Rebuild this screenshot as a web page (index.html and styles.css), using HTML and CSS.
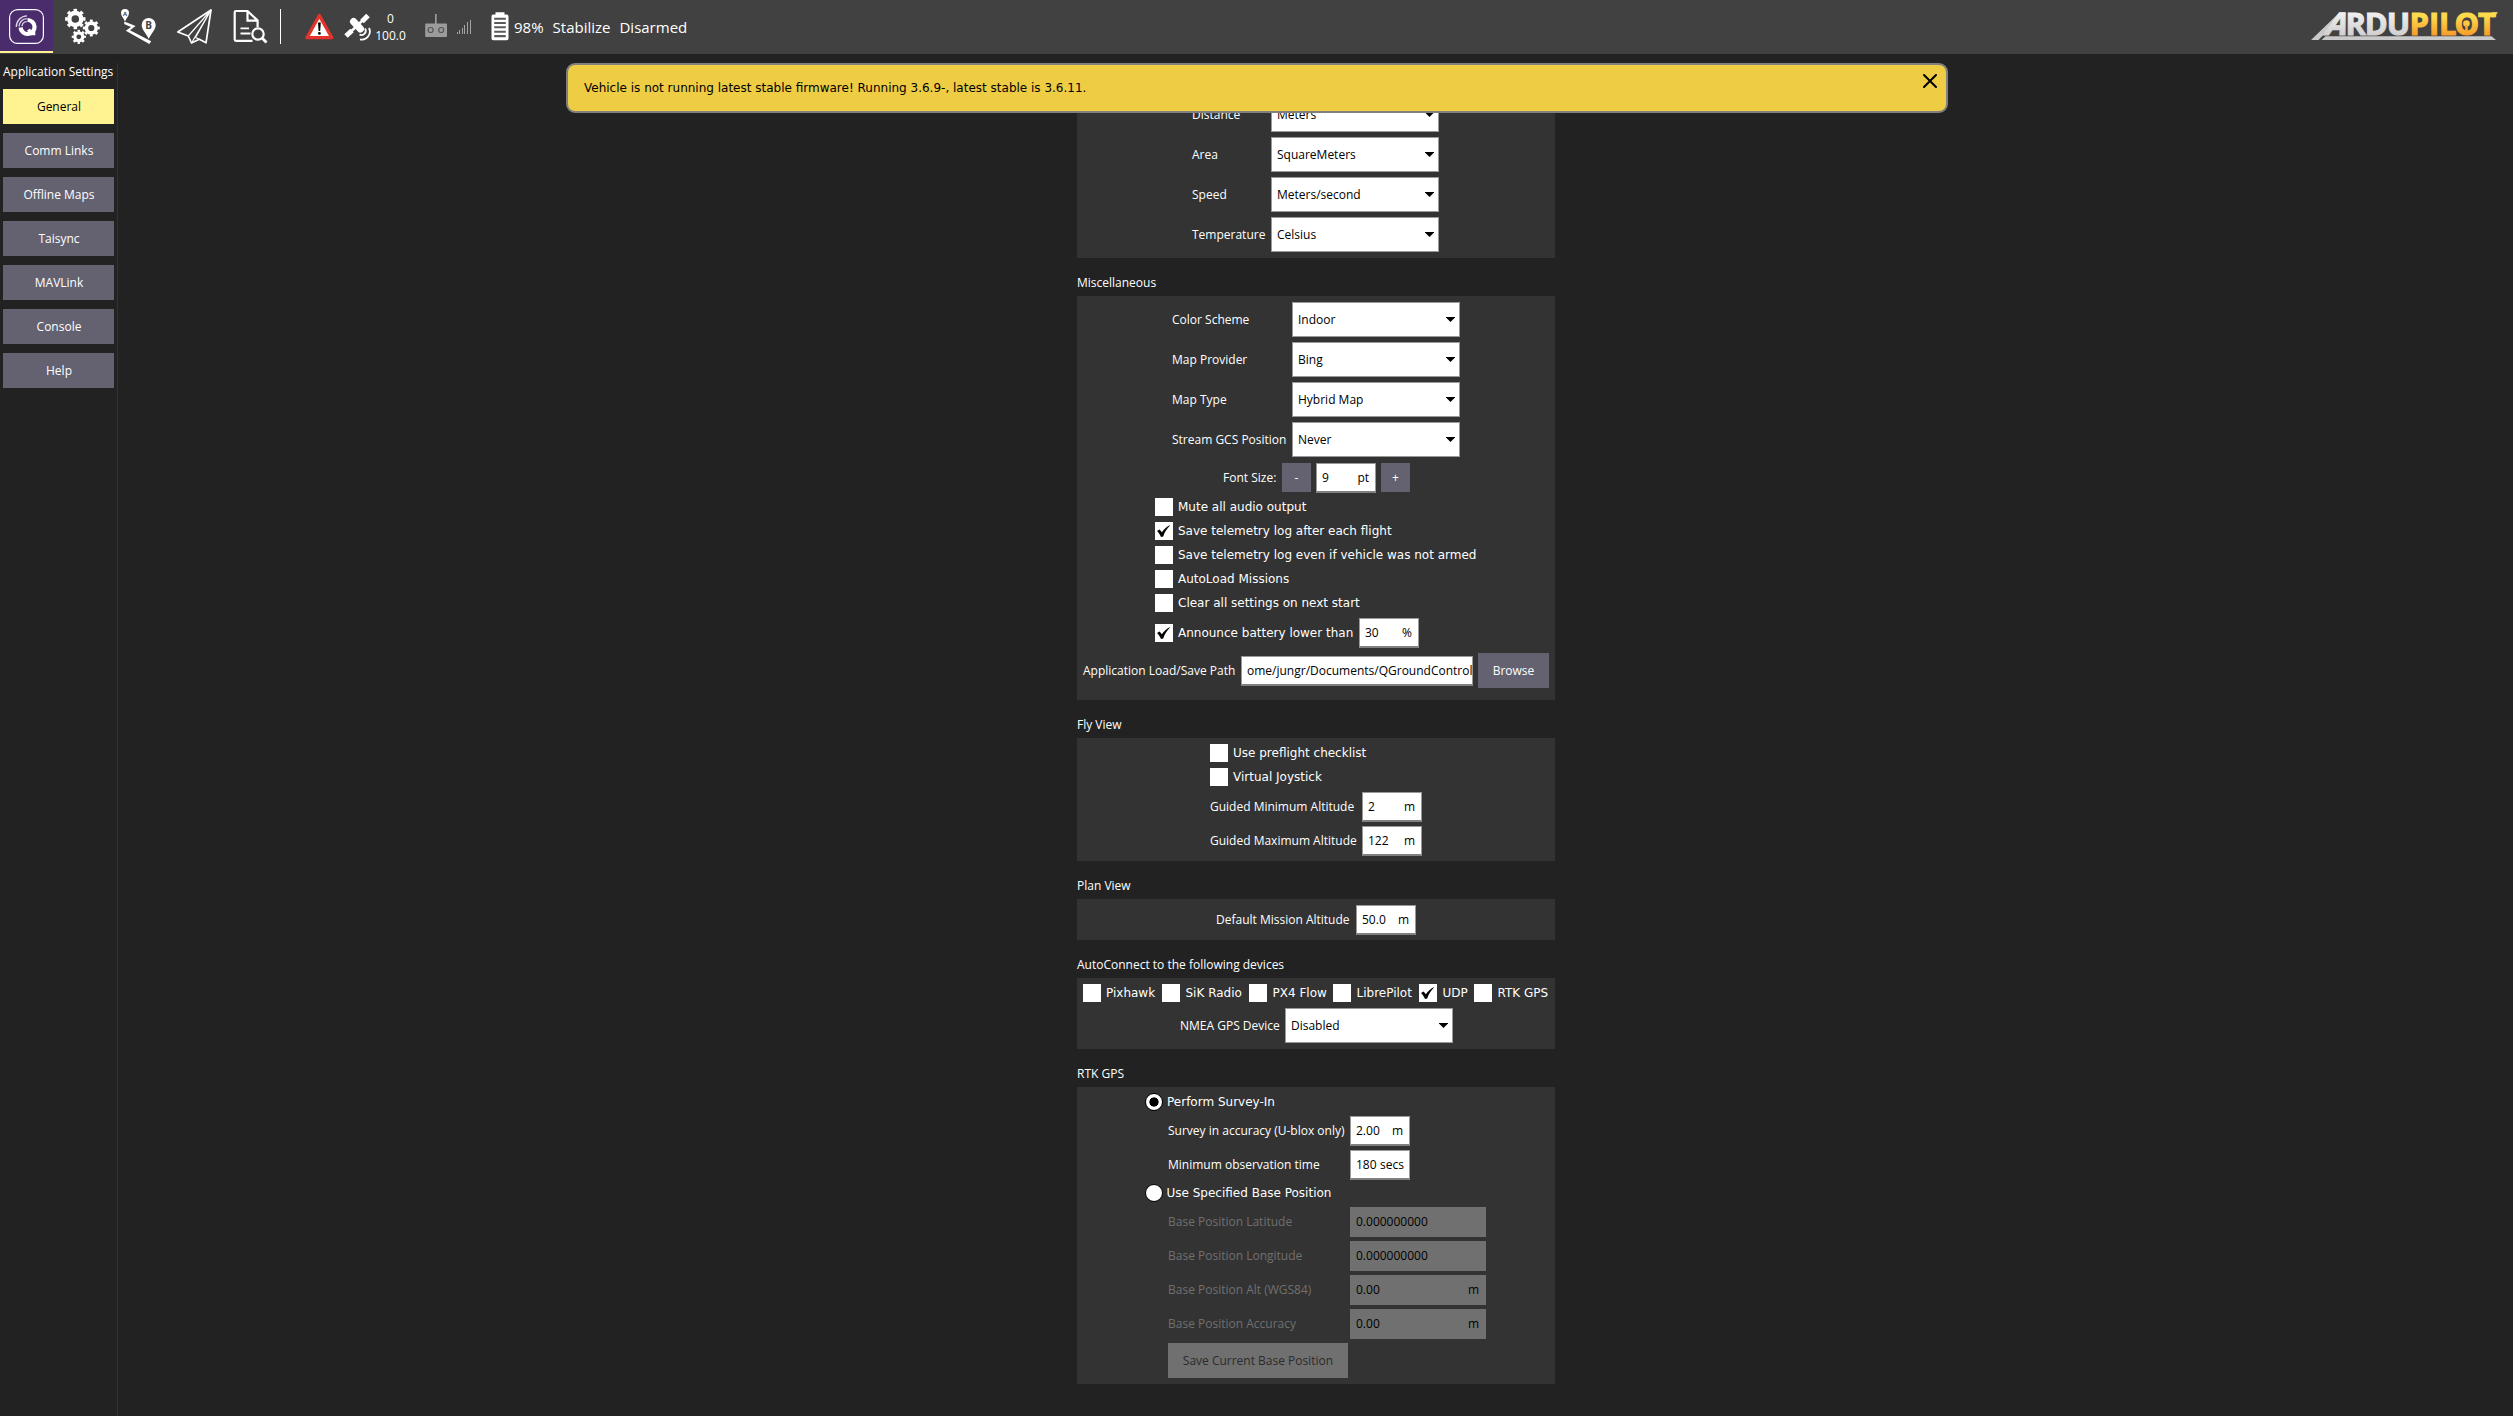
FILE: index.html
```html
<!DOCTYPE html>
<html lang="en">
<head>
<meta charset="utf-8">
<title>QGroundControl</title>
<link rel="stylesheet" href="styles.css">
</head>
<body>
<svg class="defs" width="0" height="0">
  <symbol id="tick" viewBox="0 0 18 18"><path d="M2 9 4.6 7.4 6.9 10.2C8.8 7.4 11 5 14.6 3.2L14.9 3.8C12 6.6 9.6 10.2 8.2 14.4L6 14.9C5 12.6 3.7 10.7 2 9Z"/></symbol>
</svg>
<header class="toolbar">
  <nav class="views">
    <a class="view active"><svg width="53" height="54" viewBox="0 0 53 54" fill="none" stroke="#fff">
      <rect x="9.6" y="9.6" width="33.8" height="33.8" rx="8" stroke-width="1.2"/>
      <path d="M27.5 20A7 7 0 1 1 20.6 27.5" stroke-width="4.2"/>
      <path d="M28.5 29.500 31 33.500H35.300" stroke-width="3.5"/>
      <path d="M16.3 27A11 11 0 0 1 27 15.8M19 26.4A8.2 8.2 0 0 1 26.8 18.6M22 26.2A5 5 0 0 1 26.8 21.6" stroke-width="1.3" stroke="#ddd6e6"/>
    </svg></a>
    <a class="view"><svg width="53" height="54" viewBox="56 0 53 54" fill="none" stroke="#fff">
      <circle cx="75.3" cy="19" r="6" stroke-width="4.4"/>
      <circle cx="75.3" cy="19" r="8.9" stroke-width="2.6" pathLength="16" stroke-dasharray="1" stroke-dashoffset=".5"/>
      <circle cx="91.3" cy="28" r="4.9" stroke-width="3.6"/>
      <circle cx="91.3" cy="28" r="7.3" stroke-width="2.4" pathLength="16" stroke-dasharray="1" stroke-dashoffset=".5"/>
      <circle cx="78.8" cy="36.8" r="4" stroke-width="3.2"/>
      <circle cx="78.8" cy="36.8" r="6" stroke-width="2.2" pathLength="16" stroke-dasharray="1" stroke-dashoffset=".5"/>
    </svg></a>
    <a class="view"><svg width="53" height="54" viewBox="112 0 53 54" fill="#fff">
      <path d="M125 21.5C123.8 18.5 121 16.3 121 13a4 4 0 0 1 8 0C129 16.3 126.2 18.5 125 21.5Z"/>
      <text class="pin-a" x="125" y="15.8">A</text>
      <path d="M124.4 21.600 135.6 26 130 30.2 151.2 41.3 149.3 44 125.8 30.800 131 27 124.2 23.900Z"/>
      <path d="M148.700 38.9C146.5 33.5 141.7 30 141.7 25a7 7 0 0 1 14 0C155.700 30 151 33.500 148.700 38.900Z"/>
      <text class="pin-b" x="148.7" y="28.7">B</text>
    </svg></a>
    <a class="view"><svg width="53" height="54" viewBox="168 0 53 54" fill="none" stroke="#fff" stroke-width="1.7" stroke-linejoin="round">
      <path d="M177.800 32 211 10 206 42.800 199.300 39.300 191.500 43 188.300 36Z"/>
      <path d="M211 10 188.300 36M211 10 191.500 43M211 10 195.500 37.500 199.300 39.300" stroke-width="1.2"/>
    </svg></a>
    <a class="view"><svg width="53" height="54" viewBox="224 0 53 54" fill="none" stroke="#fff" stroke-width="2.2">
      <path d="M252.500 40.900H236Q234.700 40.900 234.700 39.600V12.300Q234.700 11 236 11H247.500L257.600 20.500V27M247.500 11V20.700H257.500"/>
      <path d="M240.500 28.400H249M240.500 33.500H250.500" stroke-width="1.8"/>
      <circle cx="258" cy="34" r="5.700"/>
      <path d="M262.300 38.300 266.500 42.500" stroke-width="2.8"/>
    </svg></a>
  </nav>
  <div class="separator"></div>
  <div class="status">
    <svg class="s-warn" width="30" height="54" viewBox="304 0 30 54"><path d="M319.300 15.500 307 37.700H331.800Z" fill="#fff" stroke="#e3342b" stroke-width="3.3" stroke-linejoin="round"/><path d="M318 22.500H320.800L320.200 31H318.600Z"/><circle cx="319.400" cy="33.400" r="1.400"/></svg>
    <svg class="s-gps" width="28" height="54" viewBox="344 0 28 54" fill="none" stroke="#fff">
      <path d="M346 36 352 30.500M362 21.500 368 15.500" stroke-width="5"/>
      <path d="M351 31.500 363 20" stroke-width="2.5"/>
      <path d="M353.500 21.500 360.500 29" stroke-width="7" stroke-linecap="round"/>
      <path d="M365 28.500A4.200 4.200 0 0 1 359.500 34.500M369 28A8 8 0 0 1 360 39.300" stroke-width="1.8"/>
    </svg>
    <div class="gps"><span>0</span><span>100.0</span></div>
    <svg class="s-rc" width="48" height="54" viewBox="424 0 48 54" fill="#9b9b9b">
      <path d="M435 14h1.700v10h-1.700zM426 23.500h20.200q.8 0 .8.800v12q0 .8-.8.800H426q-.8 0-.8-.8V24.300q0-.8.800-.8z"/>
      <g fill="none" stroke="#555" stroke-width="1.2"><circle cx="430.600" cy="30" r="2.500"/><circle cx="441.200" cy="30" r="2.500"/></g>
      <path d="M457 32h1v2h-1zM459 30h1v4h-1zM462 28h1v6h-1zM464 25h1v9h-1zM467 22h1v12h-1zM470 20h1v14h-1z" fill="#a6a6a6"/>
    </svg>
    <svg class="s-bat" width="18" height="54" viewBox="491 0 18 54"><path d="M495.500 12.300h9v2.300h2.300q1.700 0 1.700 1.700v22.300q0 1.700-1.700 1.700h-13.600q-1.700 0-1.700-1.700V16.300q0-1.700 1.700-1.700h2.300z" fill="#fff"/><path d="M494.200 17.700h11.600v2h-11.600zM494.200 22h11.600v2h-11.600zM494.200 26.300h11.600v2h-11.600zM494.200 30.700h11.600v2h-11.600zM494.200 35h11.600v2.300h-11.600z" fill="#5a5a5a"/></svg>
    <span class="pct">98%</span><span class="mode">Stabilize</span><span>Disarmed</span>
  </div>
  <svg class="brand" width="190" height="54" viewBox="2310 0 190 54">
    <defs>
      <linearGradient id="silver" x1="0" y1="0" x2="0" y2="1"><stop offset="0" stop-color="#fff"/><stop offset="1" stop-color="#c4c4c4"/></linearGradient>
      <linearGradient id="gold" gradientUnits="userSpaceOnUse" x1="0" y1="12" x2="0" y2="36"><stop offset=".2" stop-color="#fdd94c"/><stop offset="1" stop-color="#f79a27"/></linearGradient>
    </defs>
    <path d="M2311 40 2339 13H2345L2318.500 40ZM2321.500 40 2325.500 36.300H2491.500L2496 40Z" fill="#c9c9c9"/>
    <text class="letters silver" transform="translate(2323.500 35) skewX(-20)">A</text>
    <text class="letters silver" y="35"><tspan x="2345.500">R</tspan><tspan x="2364.800">D</tspan><tspan x="2386.800">U</tspan></text>
    <text class="letters gold" y="35"><tspan x="2409.500">P</tspan><tspan x="2429">I</tspan><tspan x="2439">L</tspan><tspan x="2454.500">O</tspan><tspan x="2478">T</tspan></text>
    <circle cx="2466.500" cy="23.500" r="3.300" fill="#fdc843"/><path d="M2465.200 25h2.600v9h-2.600z" fill="#f9a52d"/>
    <path d="M2492 12.300H2498L2494 17.300H2492Z" fill="#fdd94c"/>
  </svg>
</header>
<div class="body">
  <aside class="sidebar">
    <h1>Application Settings</h1>
    <button class="active">General</button><button>Comm Links</button><button>Offline Maps</button><button>Taisync</button><button>MAVLink</button><button>Console</button><button>Help</button>
  </aside>
  <main class="settings">
    <section class="group units">
      <div class="row"><label>Distance</label><div class="combo">Meters</div></div>
      <div class="row"><label>Area</label><div class="combo">SquareMeters</div></div>
      <div class="row"><label>Speed</label><div class="combo">Meters/second</div></div>
      <div class="row"><label>Temperature</label><div class="combo">Celsius</div></div>
    </section>
    <h2>Miscellaneous</h2>
    <section class="group misc">
      <div class="row"><label>Color Scheme</label><div class="combo">Indoor</div></div>
      <div class="row"><label>Map Provider</label><div class="combo">Bing</div></div>
      <div class="row"><label>Map Type</label><div class="combo">Hybrid Map</div></div>
      <div class="row"><label>Stream GCS Position</label><div class="combo">Never</div></div>
      <div class="font-size"><label>Font Size:</label><button>-</button><div class="field"><span>9</span><span>pt</span></div><button>+</button></div>
      <div class="checks">
        <div class="check"><i></i>Mute all audio output</div>
        <div class="check"><i><svg><use href="#tick"/></svg></i>Save telemetry log after each flight</div>
        <div class="check"><i></i>Save telemetry log even if vehicle was not armed</div>
        <div class="check"><i></i>AutoLoad Missions</div>
        <div class="check"><i></i>Clear all settings on next start</div>
        <div class="announce"><div class="check"><i><svg><use href="#tick"/></svg></i>Announce battery lower than</div><div class="field"><span>30</span><span>%</span></div></div>
      </div>
      <div class="path"><label>Application Load/Save Path</label><div class="field"><span>ome/jungr/Documents/QGroundControl</span></div><button>Browse</button></div>
    </section>
    <h2>Fly View</h2>
    <section class="group fly">
      <div class="check"><i></i>Use preflight checklist</div>
      <div class="check"><i></i>Virtual Joystick</div>
      <div class="row"><label>Guided Minimum Altitude</label><div class="field"><span>2</span><span>m</span></div></div>
      <div class="row"><label>Guided Maximum Altitude</label><div class="field"><span>122</span><span>m</span></div></div>
    </section>
    <h2>Plan View</h2>
    <section class="group plan">
      <div class="row"><label>Default Mission Altitude</label><div class="field"><span>50.0</span><span>m</span></div></div>
    </section>
    <h2>AutoConnect to the following devices</h2>
    <section class="group auto">
      <div class="devices">
        <div class="check"><i></i>Pixhawk</div><div class="check"><i></i>SiK Radio</div><div class="check"><i></i>PX4 Flow</div><div class="check"><i></i>LibrePilot</div><div class="check"><i><svg><use href="#tick"/></svg></i>UDP</div><div class="check"><i></i>RTK GPS</div>
      </div>
      <div class="row"><label>NMEA GPS Device</label><div class="combo">Disabled</div></div>
    </section>
    <h2>RTK GPS</h2>
    <section class="group rtk">
      <div class="radio on"><i></i>Perform Survey-In</div>
      <div class="row"><label>Survey in accuracy (U-blox only)</label><div class="field"><span>2.00</span><span>m</span></div></div>
      <div class="row"><label>Minimum observation time</label><div class="field tight"><span>180</span><span>secs</span></div></div>
      <div class="radio"><i></i>Use Specified Base Position</div>
      <div class="row off"><label>Base Position Latitude</label><div class="field"><span>0.000000000</span></div></div>
      <div class="row off"><label>Base Position Longitude</label><div class="field"><span>0.000000000</span></div></div>
      <div class="row off"><label>Base Position Alt (WGS84)</label><div class="field"><span>0.00</span><span>m</span></div></div>
      <div class="row off"><label>Base Position Accuracy</label><div class="field"><span>0.00</span><span>m</span></div></div>
      <button class="save">Save Current Base Position</button>
    </section>
  </main>
</div>
<div class="banner"><span>Vehicle is not running latest stable firmware! Running 3.6.9-, latest stable is 3.6.11.</span>
  <svg width="14" height="14" viewBox="0 0 14 14"><path d="M1 1 13 13M13 1 1 13" stroke="#000" stroke-width="2" stroke-linecap="round"/></svg>
</div>
</body>
</html>
```
FILE: styles.css
```css
* { box-sizing: border-box; }
body {
  margin: 0;
  height: 1416px;
  overflow: hidden;
  display: flex;
  flex-direction: column;
  background: #222;
  color: #fff;
  font: 12px/18px "Open Sans", sans-serif;
  white-space: nowrap;
}
svg { display: block; }
.defs { position: absolute; }
h1, h2 { margin: 0; font-size: 12px; font-weight: 400; line-height: 18px; }
button {
  height: 35px;
  padding: 0;
  border: 0;
  background: #646271;
  color: #fff;
  font: inherit;
}

/* Toolbar */
.toolbar { display: flex; flex: none; height: 54px; background: #414141; }
.views { display: flex; gap: 3px; }
.view { width: 53px; height: 53px; overflow: hidden; }
.view.active { background: #4a2c6d; border-bottom: 2px solid #fff291; }
.separator { width: 1px; height: 35px; margin: 9px 0 0 3px; background: #fff; }
.pin-a, .pin-b { fill: #414141; font-weight: 700; text-anchor: middle; }
.pin-a { font-size: 6px; }
.pin-b { font-size: 10px; }
.status { display: flex; align-items: center; font-size: 15px; margin-left: 23px; }
.s-gps { margin-left: 10px; }
.gps { display: flex; flex-direction: column; align-items: center; width: 31px; margin-left: 3px; font-size: 12px; line-height: 17px; }
.s-rc { margin-left: 18px; }
.s-bat { margin-left: 19px; }
.pct { margin-left: 5px; }
.mode { margin: 0 9px; }
.brand { margin: 0 13px 0 auto; }
.letters { font: 700 31px "Open Sans", sans-serif; stroke-width: 1px; }
.silver { fill: url(#silver); stroke: url(#silver); }
.gold { fill: url(#gold); stroke: url(#gold); }

/* Sidebar */
.body { display: flex; flex: 1; padding-top: 9px; }
.sidebar {
  display: flex;
  flex-direction: column;
  gap: 9px;
  width: 118px;
  padding-left: 3px;
  padding-right: 3px;
  border-right: 1px solid #333;
}
.sidebar h1 { height: 17px; }
.sidebar button { padding-left: 1px; }
.sidebar button.active { background: #fff291; color: #000; }

/* Settings */
.settings { width: 478px; margin-left: 959px; padding-top: 28px; }
h2 { height: 38px; padding-top: 16px; }
.group { background: #333; padding: 6px 0; }
.row { display: flex; align-items: center; }
.combo {
  display: flex;
  align-items: center;
  justify-content: space-between;
  width: 168px;
  height: 35px;
  padding: 0 4px 0 5px;
  border: 1px solid #999;
  background: #fff;
  color: #000;
}
.combo::after {
  content: "";
  width: 9px;
  height: 5px;
  background: #000;
  clip-path: polygon(0 0, 100% 0, 100% 10%, 50% 100%, 0 10%);
}
.field {
  display: flex;
  justify-content: space-between;
  width: 60px;
  height: 30px;
  padding: 5px 6px 0 5px;
  border: 1px solid #999;
  border-bottom: 2px solid #808080;
  background: #fff;
  color: #000;
  overflow: hidden;
}
.field.tight { padding-right: 5px; }
.check, .radio {
  display: flex;
  align-items: center;
  gap: 5px;
  height: 18px;
  font-family: "DejaVu Sans", sans-serif;
}
.check i { flex: none; width: 18px; height: 18px; background: #fff; }
.check svg { width: 18px; height: 18px; }

.units .row, .misc .row { margin-bottom: 5px; }
.units .row { padding-left: 115px; }
.units label { width: 79px; }
.units .row:last-child { margin-bottom: 0; }
.misc { height: 404px; }
.misc .row { padding-left: 95px; }
.misc .row label { width: 120px; }
.font-size { display: flex; align-items: center; gap: 5px; margin-top: 6px; padding-left: 146px; }
.font-size label { width: 54px; }
.font-size button { width: 29px; height: 29px; align-self: flex-start; }
.checks { display: flex; flex-direction: column; gap: 6px; padding: 5px 0 0 78px; }
.announce { display: flex; align-items: center; gap: 6px; }
.announce .check { width: 198px; }
.path { display: flex; align-items: center; gap: 5px; padding: 5px 0 0 6px; }
.path label { width: 153px; }
.path .field { width: 232px; padding-right: 0; }
.path button { width: 71px; }

.fly { height: 123px; padding-left: 133px; }
.fly .check { margin-bottom: 6px; }
.fly .row { margin-bottom: 4px; }
.fly label { width: 152px; }
.plan { height: 41px; padding-left: 139px; }
.plan label { width: 140px; }

.devices { display: grid; grid-template-columns: 79px 87px 84px 86px 55px auto; padding: 0 0 6px 6px; }
.devices .check + .check { gap: 5.5px; }
.auto .row { padding-left: 103px; }
.auto label { width: 105px; }

.rtk { height: 297px; }
.rtk .row { margin-bottom: 4px; padding-left: 91px; }
.rtk label { width: 182px; }
.radio { gap: 3.5px; padding-left: 68px; }
.radio i { width: 18px; height: 18px; border: 1px solid #000; border-radius: 50%; background: #fff; }
.radio.on i { background: radial-gradient(circle, #000 4.3px, #fff 4.9px); }
.radio.on { gap: 4px; margin-bottom: 5px; }
.rtk .row + .radio { margin: 4px 0 5px; }
.off label { color: #707070; }
.off .field { width: 136px; padding: 6px 7px 6px 6px; border: 0; background: #707070; }
.save { width: 180px; margin-left: 91px; background: #707070; color: #2b2b2b; }

/* Firmware notice floating over the settings page */
.banner {
  position: absolute;
  left: 566px;
  top: 63px;
  width: 1382px;
  height: 50px;
  display: flex;
  justify-content: space-between;
  padding: 9px 9px 0 16px;
  border: 2px solid #808080;
  border-radius: 9px;
  background: #eecc44;
  color: #000;
  font: 12px/28px "DejaVu Sans", sans-serif;
}
```
